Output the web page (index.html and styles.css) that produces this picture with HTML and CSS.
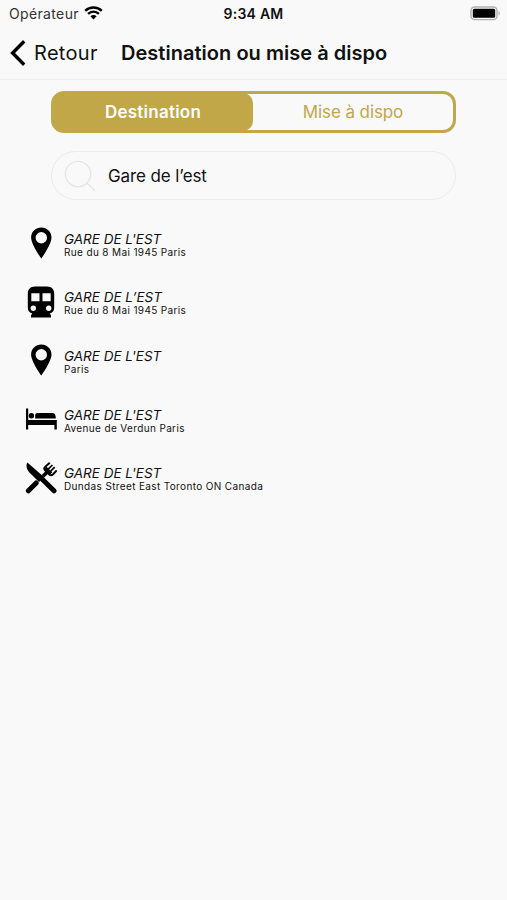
FILE: index.html
```html
<!DOCTYPE html>
<html lang="fr">

<head>
    <meta charset="UTF-8">
    <meta name="viewport" content="width=device-width, initial-scale=1.0">
    <title>Destination ou mise à dispo</title>
    <link rel="stylesheet" href="styles.css">
</head>

<body>
    <header class="header">
        <div class="status-bar">
            <div class="carrier">
                <span class="carrier-name">Opérateur</span>
                <svg class="wifi" width="19" height="14" viewBox="0 0 19 14">
                    <path d="M1.2 4.9a12 12 0 0 1 16.6 0M4.1 7.8a7.8 7.8 0 0 1 10.8 0" fill="none" stroke="#000" stroke-width="2.4" />
                    <path d="M6.4 10.3a4.6 4.6 0 0 1 6.2 0L9.5 13.5z" />
                </svg>
            </div>
            <span class="time">9:34 AM</span>
            <svg class="battery" width="31" height="15" viewBox="0 0 31 15">
                <rect x="1" y="1" width="26" height="12.6" rx="3.6" fill="#f9f9f9" stroke="#b0b0b0" stroke-width="1.4" />
                <rect x="2.8" y="2.8" width="22.4" height="9" rx="1.6" />
                <path d="M28.5 5c1.7.5 1.7 4.1 0 4.6z" fill="#b0b0b0" />
            </svg>
        </div>
        <nav class="nav">
            <a class="back" href="#">
                <svg width="16" height="26" viewBox="0 0 16 26">
                    <path d="M14.2 1.2L2.6 13l11.6 11.8" fill="none" stroke="#000" stroke-width="3.4" />
                </svg>
                <span class="back-label">Retour</span>
            </a>
            <h1 class="title">Destination ou mise à dispo</h1>
        </nav>
    </header>

    <main class="content">
        <div class="tabs">
            <button class="tab active" type="button">Destination</button>
            <button class="tab" type="button">Mise à dispo</button>
        </div>

        <div class="search">
            <svg width="32" height="32" viewBox="0 0 32 32" fill="none" stroke="#e6e6e6" stroke-width="1.4">
                <circle cx="14" cy="14" r="12.6" />
                <path d="M23 23l8 8" />
            </svg>
            <span class="search-text">Gare de l’est</span>
        </div>

        <ul class="results">
            <li class="result">
                <svg class="icon" width="32" height="32" viewBox="0 0 32 32">
                    <path fill-rule="evenodd" d="M16.300.5C10.500.5 6.100 4.900 6.100 10.500c0 7 10.200 21 10.200 21s10.200-14 10.200-21C26.500 4.900 22.100.5 16.300.5zm0 4.500a5.700 5.700 0 1 1 0 11.400 5.700 5.700 0 0 1 0-11.400z" />
                </svg>
                <div class="place">
                    <span class="name">GARE DE L'EST</span>
                    <span class="address">Rue du 8 Mai 1945 Paris</span>
                </div>
            </li>
            <li class="result">
                <svg class="icon" width="32" height="32" viewBox="0 0 32 32">
                    <path fill-rule="evenodd" d="M10 .5h12c4.500 0 7.200 2.800 7.200 7v14c0 3.200-1.700 5.300-4.500 6l1.300 1.700v2.300H6v-2.300l1.300-1.700c-2.800-.7-4.500-2.800-4.500-6v-14c0-4.200 2.700-7 7.200-7zM6.300 7.200v8h8.200v-8zm11.200 0v8h8.200v-8zM8.300 19.500a2.700 2.700 0 1 0 0 5.400 2.700 2.700 0 0 0 0-5.400zm15.400 0a2.700 2.700 0 1 0 0 5.400 2.700 2.700 0 0 0 0-5.400z" />
                </svg>
                <div class="place">
                    <span class="name">GARE DE L’EST</span>
                    <span class="address">Rue du 8 Mai 1945 Paris</span>
                </div>
            </li>
            <li class="result">
                <svg class="icon" width="32" height="32" viewBox="0 0 32 32">
                    <path fill-rule="evenodd" d="M16.300.5C10.500.5 6.100 4.900 6.100 10.500c0 7 10.200 21 10.200 21s10.200-14 10.200-21C26.500 4.900 22.100.5 16.300.5zm0 4.500a5.700 5.700 0 1 1 0 11.400 5.700 5.700 0 0 1 0-11.400z" />
                </svg>
                <div class="place">
                    <span class="name">GARE DE L'EST</span>
                    <span class="address">Paris</span>
                </div>
            </li>
            <li class="result">
                <svg class="icon" width="32" height="32" viewBox="0 0 32 32">
                    <path d="M1 5.500h2.200v11.500h28.600v9.500h-2.400v-4.500H3.200v4.500H1z" />
                    <circle cx="6.400" cy="12.700" r="2.700" />
                    <path d="M12.400 9.900h15.500q2.900.4 2.900 5.500H10.200V12q0-2.100 2.200-2.100z" />
                </svg>
                <div class="place">
                    <span class="name">GARE DE L'EST</span>
                    <span class="address">Avenue de Verdun Paris</span>
                </div>
            </li>
            <li class="result">
                <svg class="icon" width="32" height="32" viewBox="0 0 32 32" fill="none" stroke="#000">
                    <path d="M3.400 28.800L11.200 21" stroke-width="5" stroke-linecap="round" />
                    <path d="M18 14.200l4.200-4.200" stroke-width="3.600" />
                    <path d="M17.500 17.500L29 28.800" stroke-width="5" stroke-linecap="round" />
                    <path d="M2.400.6C.8 3 1.400 7.200 4.200 10.200l9.800 9.800 5.200-4.800z" fill="#000" stroke="none" />
                    <path d="M19.300 7.500l5.200 5.200c1.300.8 2.500.5 3.600-.5l3.600-3.800M19.300 7.500c-.4-1 .3-2.200 1.200-3L24.800.7" stroke-width="1.900" />
                    <path d="M19.600 7l5.400 5.400 2.300-1.800-6-6z" fill="#000" stroke="none" />
                    <path d="M22.500 7.900l4.900-4.900M24.700 10.100l5-4.900" stroke-width="1.700" />
                </svg>
                <div class="place">
                    <span class="name">GARE DE L'EST</span>
                    <span class="address">Dundas Street East Toronto ON Canada</span>
                </div>
            </li>
        </ul>
    </main>
</body>

</html>
```
FILE: styles.css
```css
* {
    margin: 0;
    padding: 0;
    box-sizing: border-box;
}

body {
    font-family: 'Inter', sans-serif;
    background: #f9f9f9;
    color: #111;
    min-height: 100vh;
}

.header {
    height: 80px;
    border-bottom: 1px solid #eee;
}

.status-bar {
    display: grid;
    grid-template-columns: 1fr auto 1fr;
    align-items: center;
    height: 27px;
    padding: 0 6px 0 9px;
    font-size: 14px;
}

.carrier {
    display: flex;
    align-items: center;
    gap: 5px;
    color: #333;
    letter-spacing: 0.35px;
}

.wifi {
    margin-top: -2px;
}

.time {
    margin-right: 3px;
    font-weight: 600;
    letter-spacing: 0.25px;
}

.battery {
    justify-self: end;
}

.nav {
    display: flex;
    align-items: center;
    height: 51px;
    padding-left: 10px;
}

.back {
    display: flex;
    align-items: center;
    gap: 8px;
    width: 111px;
    color: #111;
    font-size: 20px;
    letter-spacing: 0.3px;
    text-decoration: none;
}

.title {
    font-size: 20px;
    font-weight: 600;
    letter-spacing: 0.03px;
    white-space: nowrap;
}

.content {
    padding: 11px 51px 0;
}

.tabs {
    display: flex;
    height: 42px;
    border: 3px solid #c1a748;
    border-radius: 13px;
}

.tab {
    flex: 1;
    border: none;
    background: transparent;
    color: #c1a748;
    font-family: inherit;
    font-size: 17px;
    letter-spacing: -0.1px;
}

.tab.active {
    /* covers the thin gap inside the rounded border */
    margin: -1px 0 -1px -1px;
    border-radius: 10px;
    background: #c1a748;
    color: #fff;
    font-weight: 600;
    letter-spacing: 0.25px;
}

.search {
    display: flex;
    align-items: center;
    gap: 12px;
    height: 49px;
    margin-top: 18px;
    padding-left: 12px;
    border: 1px solid #ebebeb;
    border-radius: 25px;
    font-size: 17px;
    letter-spacing: -0.1px;
}

.results {
    margin: 14px 0 0 -26px;
    list-style: none;
}

.result {
    display: flex;
    align-items: center;
    gap: 7px;
    height: 58.6px;
}

.place {
    display: flex;
    flex-direction: column;
    padding-top: 2px;
}

.name {
    font-size: 13.5px;
    font-style: italic;
    line-height: 16px;
}

.address {
    font-size: 10px;
    line-height: 11px;
    letter-spacing: 0.36px;
}
```
